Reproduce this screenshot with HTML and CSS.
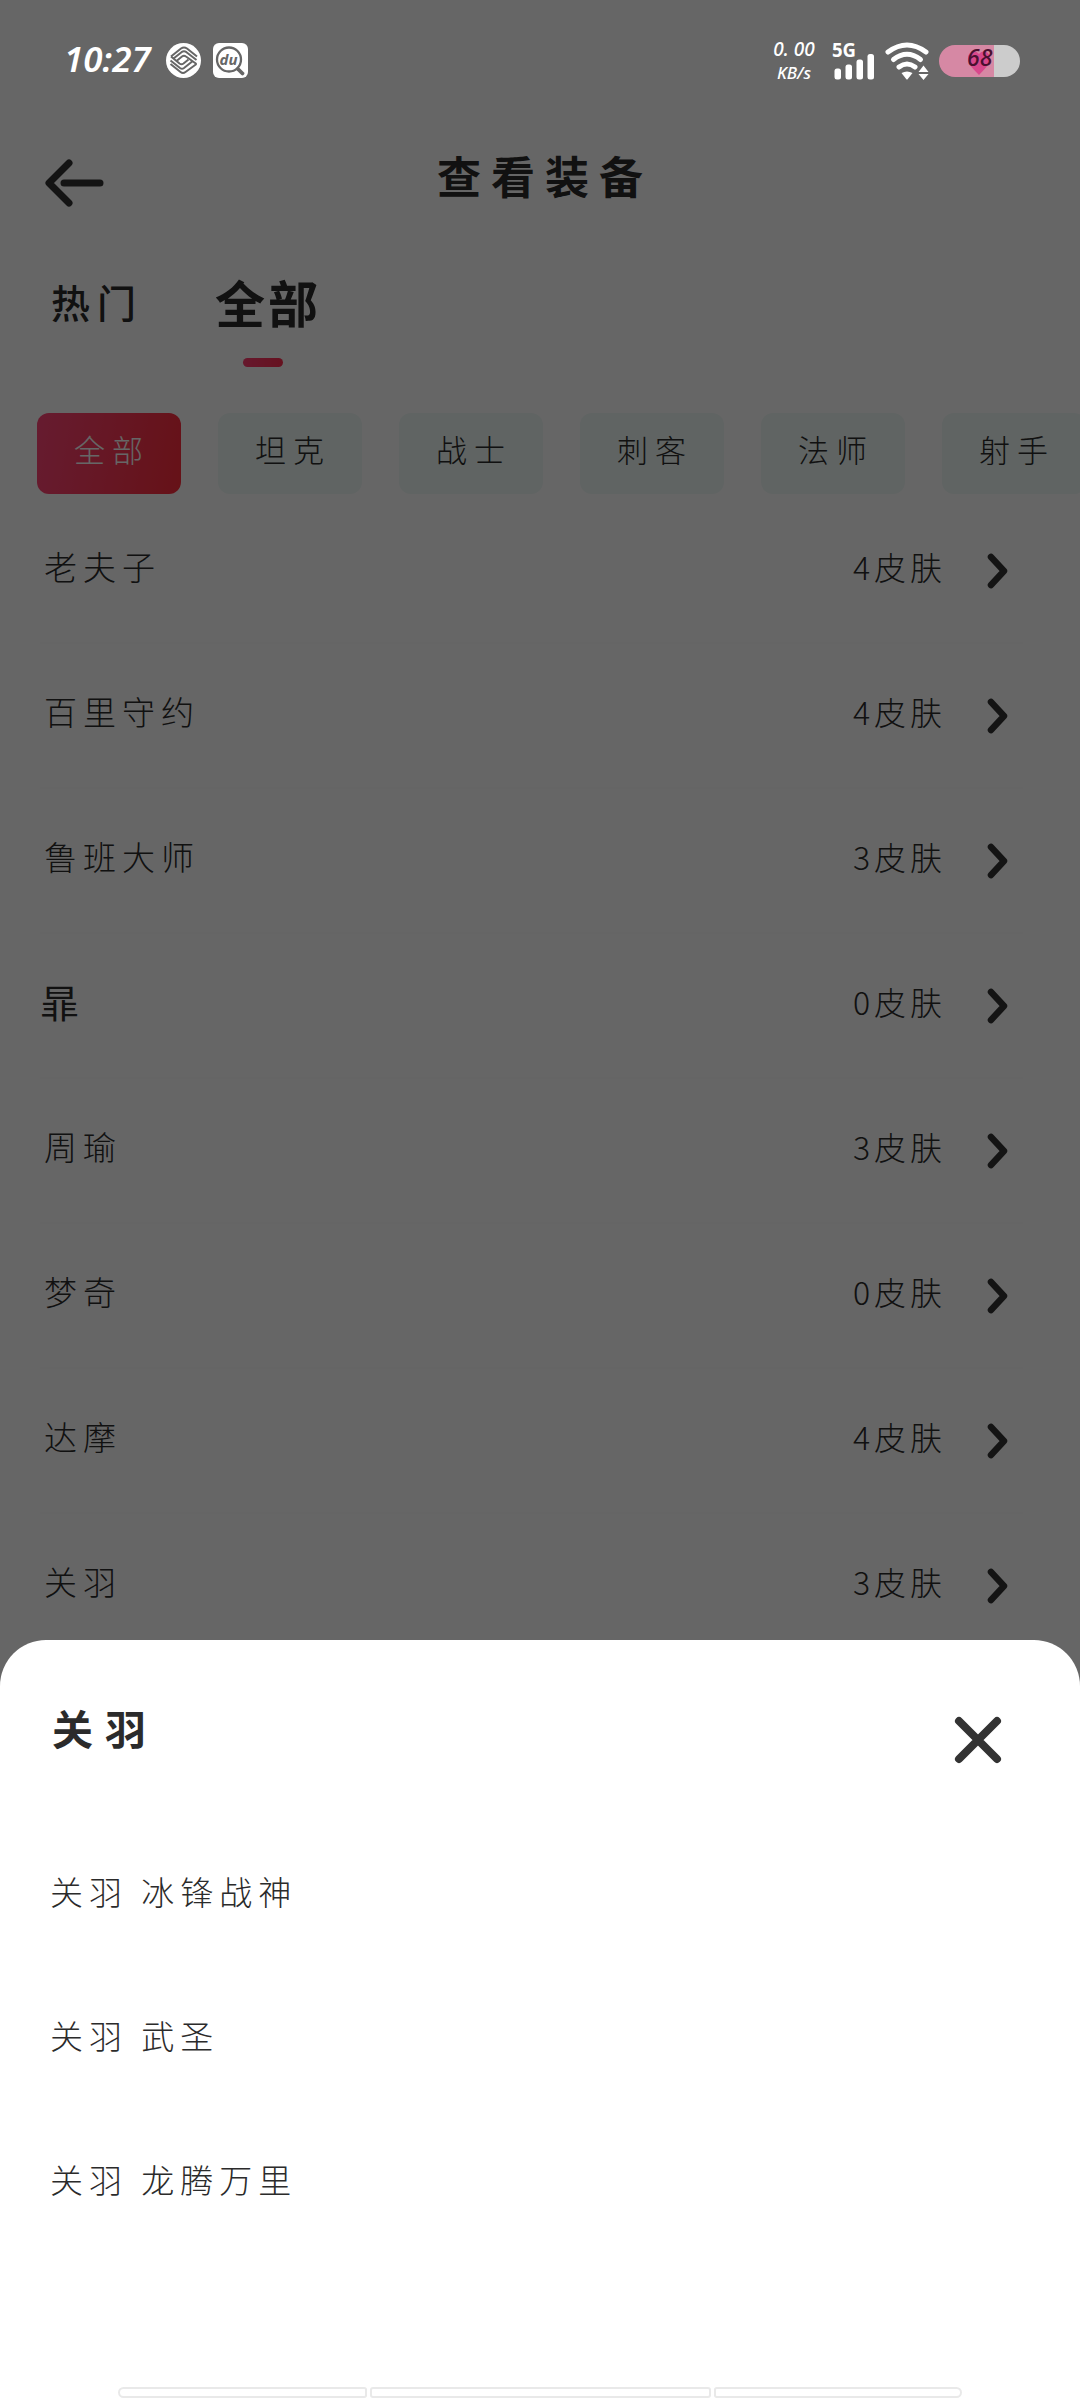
FILE: index.html
```html
<!DOCTYPE html>
<html lang="zh-CN">
<head>
<meta charset="utf-8">
<title>查看装备</title>
<link rel="stylesheet" href="styles.css">
</head>
<body>
<div class="screen">
  <div class="page">
    <header class="nav">
      <svg class="back" width="60" height="52" viewBox="0 0 60 52"><path d="M26 6 6 26 26 46M21 26H57" /></svg>
      <h1 class="nav-title">查看装备</h1>
    </header>
    <nav class="tabs">
      <span class="tab">热门</span>
      <span class="tab tab-on">全部</span>
    </nav>
    <div class="chips">
      <span class="chip chip-on">全部</span>
      <span class="chip">坦克</span>
      <span class="chip">战士</span>
      <span class="chip">刺客</span>
      <span class="chip">法师</span>
      <span class="chip">射手</span>
    </div>
    <ul class="heroes">
      <li class="hero"><span class="name">老夫子</span><span class="count">4皮肤</span><svg class="go" width="22" height="36" viewBox="0 0 22 36"><path d="M4 4 17 18 4 32"/></svg></li>
      <li class="hero"><span class="name">百里守约</span><span class="count">4皮肤</span><svg class="go" width="22" height="36" viewBox="0 0 22 36"><path d="M4 4 17 18 4 32"/></svg></li>
      <li class="hero"><span class="name">鲁班大师</span><span class="count">3皮肤</span><svg class="go" width="22" height="36" viewBox="0 0 22 36"><path d="M4 4 17 18 4 32"/></svg></li>
      <li class="hero"><span class="name name-rare">暃</span><span class="count">0皮肤</span><svg class="go" width="22" height="36" viewBox="0 0 22 36"><path d="M4 4 17 18 4 32"/></svg></li>
      <li class="hero"><span class="name">周瑜</span><span class="count">3皮肤</span><svg class="go" width="22" height="36" viewBox="0 0 22 36"><path d="M4 4 17 18 4 32"/></svg></li>
      <li class="hero"><span class="name">梦奇</span><span class="count">0皮肤</span><svg class="go" width="22" height="36" viewBox="0 0 22 36"><path d="M4 4 17 18 4 32"/></svg></li>
      <li class="hero"><span class="name">达摩</span><span class="count">4皮肤</span><svg class="go" width="22" height="36" viewBox="0 0 22 36"><path d="M4 4 17 18 4 32"/></svg></li>
      <li class="hero"><span class="name">关羽</span><span class="count">3皮肤</span><svg class="go" width="22" height="36" viewBox="0 0 22 36"><path d="M4 4 17 18 4 32"/></svg></li>
    </ul>
  </div>

  <div class="mask"></div>

  <div class="status">
    <span class="clock">10:27</span>
    <svg class="carrier" width="35" height="35" viewBox="0 0 35 35">
      <circle cx="17.5" cy="17.5" r="17.5" fill="#fff"/>
      <g fill="none" stroke="#666" stroke-width="2" stroke-linejoin="round">
        <path d="M5 13.500 15 5.500Q18 3.500 21 5.500L31 13.500"/>
        <path d="M5 13.500 13.500 20.500Q15.500 22 17.500 20.500L22.500 16.500"/>
        <path d="M7.500 15.500 15.500 9.200Q18 7.500 20.500 9.200L30.500 17"/>
        <path d="M10.500 18 16 13.500Q18 12 20 13.500L30.500 21"/>
        <path d="M4.500 17.500 14 25Q16 26.500 18 25L26.500 18.200"/>
        <path d="M4.500 21 14.500 29Q17 31 19.500 29L30.500 21"/>
      </g>
    </svg>
    <svg class="du" width="35" height="35" viewBox="0 0 35 35">
      <rect width="35" height="35" rx="6" fill="#fff"/>
      <circle cx="16" cy="16.500" r="12" fill="none" stroke="#666" stroke-width="2.300"/>
      <path d="M25 26 29.500 30.500" stroke="#666" stroke-width="3.800" stroke-linecap="round"/>
      <text class="du-text" x="15.500" y="21.500" text-anchor="middle">du</text>
    </svg>
    <div class="rate"><span>0. 00</span><span class="unit">KB/s</span></div>
    <svg class="signal" width="44" height="38" viewBox="0 0 44 38" fill="#fff">
      <text class="gen" x="0" y="15" textLength="24" lengthAdjust="spacingAndGlyphs">5G</text>
      <rect x="2.500" y="26.500" width="6.500" height="11" rx="2.500"/>
      <rect x="13.500" y="22.500" width="6.500" height="15" rx="2.500"/>
      <rect x="24.500" y="17.500" width="6.500" height="20" rx="2.500"/>
      <rect x="35.500" y="12" width="6.500" height="25.500" rx="2.500"/>
    </svg>
    <svg class="wifi" width="46" height="38" viewBox="0 0 46 38">
      <g fill="none" stroke="#fff" stroke-width="5" stroke-linecap="round">
        <path d="M3 10Q22 -4 41 10"/>
        <path d="M8.500 17.500Q22 7 35.500 17.500"/>
        <path d="M14 25Q22 19 30 25"/>
      </g>
      <path d="M16.500 31Q22 28 27.500 31L22.800 37Q22 38 21.200 37Z" fill="#fff"/>
      <path d="M38.500 23.500 43.500 30H33.500ZM33.500 32H43.500L38.500 38Z" fill="#fff"/>
    </svg>
    <div class="battery">
      <svg class="heart" width="24" height="26" viewBox="0 0 24 26"><path d="M12 25C7 20 1 14 1 8 1 2 8-1 12 4 16-1 23 2 23 8 23 14 17 20 12 25Z" fill="#d8488c"/></svg>
      <span class="level">68</span>
    </div>
  </div>

  <section class="sheet">
    <div class="sheet-head">
      <h2 class="sheet-title">关羽</h2>
      <svg class="close" width="52" height="52" viewBox="0 0 52 52"><path d="M7 7 45 45M45 7 7 45"/></svg>
    </div>
    <ul class="skins">
      <li>关羽 冰锋战神</li>
      <li>关羽 武圣</li>
      <li>关羽 龙腾万里</li>
    </ul>
    <div class="homebar"><i class="seg seg-l"></i><i class="seg seg-m"></i><i class="seg seg-r"></i></div>
  </section>
</div>
</body>
</html>
```
FILE: styles.css
```css
* { box-sizing: border-box; margin: 0; padding: 0; }
body { font-family: "Noto Sans CJK SC", sans-serif; color: #2b2b2b; }
ul { list-style: none; }
svg { display: block; flex: none; overflow: visible; }

.screen { position: relative; width: 1080px; height: 2400px; overflow: hidden; background: #fff; }
.page { display: flex; flex-direction: column; padding-top: 123px; }

.nav { display: grid; grid-template-columns: 200px 1fr 200px; align-items: center; height: 120px; }
.back { margin-left: 43px; fill: none; stroke: #333; stroke-width: 7; stroke-linecap: round; stroke-linejoin: round; }
.nav-title { padding: 0 0 16px 10px; text-align: center; font-size: 44px; font-weight: 700; letter-spacing: 10px; line-height: 60px; white-space: nowrap; }

.tabs { display: flex; height: 124px; padding-left: 51px; gap: 72px; align-items: flex-start; }
.tab { display: flex; flex-direction: column; align-items: center; height: 124px; padding-top: 28px; font-size: 39px; font-weight: 500; letter-spacing: 7px; line-height: 60px; }
.tab-on { font-size: 50px; font-weight: 700; letter-spacing: 3px; }
.tab-on::after { content: ""; width: 40px; height: 9px; margin-top: 27px; margin-right: 10px; border-radius: 5px; background: linear-gradient(90deg, #ff3d70, #ff2d50); }

.chips { display: flex; gap: 37px; padding: 46px 0 0 37px; overflow: hidden; }
.chip { flex: none; width: 144px; height: 81px; padding-left: 6px; border-radius: 12px; background: #f0faf7; text-align: center; font-size: 31px; font-weight: 300; letter-spacing: 7px; line-height: 72px; }
.chip-on { background: linear-gradient(100deg, #ff4678, #ff2d3c); color: #fff; }

.heroes { padding: 5px 57px 0 40px; }
.hero { display: flex; align-items: center; height: 145px; border-bottom: 2px solid #fcfcfc; }
.name { flex: 1; padding: 0 0 9px 4px; font-size: 33px; font-weight: 300; letter-spacing: 6px; }
.name-rare { padding: 0 0 10px 0; font-size: 39px; font-weight: 400; }
.count { padding-bottom: 9px; font-size: 32px; font-weight: 300; letter-spacing: 4px; }
.go { margin: 0 14px 0 41px; fill: none; stroke: #333; stroke-width: 6.5; stroke-linecap: round; stroke-linejoin: round; }

.mask { position: absolute; inset: 0; background: rgba(0, 0, 0, 0.6); }

.status { position: absolute; inset: 0 0 auto 0; display: flex; align-items: center; height: 121px; padding-left: 64px; color: #fff; }
.clock { width: 102px; padding-bottom: 3px; font: italic 600 35px/40px "Noto Sans", sans-serif; letter-spacing: 0; }
.du { margin-left: 12px; }
.du-text { font: italic 700 15px "Noto Sans", sans-serif; fill: #666; }
.rate { display: flex; flex-direction: column; align-items: center; width: 48px; margin-left: 522px; font: italic 500 19px/24px "Noto Sans", sans-serif; white-space: pre; }
.unit { font-size: 17px; }
.signal { margin-left: 14px; }
.gen { font: 700 19px "Noto Sans", sans-serif; }
.wifi { margin-left: 9px; }
.battery { position: relative; width: 81px; height: 32px; margin-left: 8px; border-radius: 16px; background: linear-gradient(90deg, #d688a4 55px, #ccc 55px); }
.heart { position: absolute; left: 28px; top: 5px; }
.level { position: absolute; left: 28px; top: -1px; color: #4a1030; font: italic 500 23px/26px "Noto Sans", sans-serif; }

.sheet { position: absolute; inset: 1640px 0 0 0; display: flex; flex-direction: column; border-radius: 46px 46px 0 0; background: #fff; }
.sheet-head { display: flex; justify-content: space-between; align-items: center; height: 180px; padding: 20px 76px 0 52px; }
.sheet-title { padding-bottom: 26px; font-size: 41px; font-weight: 700; letter-spacing: 12px; line-height: 60px; }
.close { fill: none; stroke: #333; stroke-width: 8; stroke-linecap: round; }
.skins { flex: 1; }
.skins li { height: 144px; padding-left: 50px; font-size: 33px; font-weight: 300; letter-spacing: 6px; line-height: 143px; }
.homebar { display: flex; gap: 3px; height: 13px; padding-left: 118px; }
.seg { height: 11px; border: 2px solid #e9e9e9; border-radius: 3px; }
.seg-l { width: 249px; border-radius: 6px 3px 3px 6px; }
.seg-m { width: 341px; }
.seg-r { width: 248px; border-radius: 3px 6px 6px 3px; }
```
